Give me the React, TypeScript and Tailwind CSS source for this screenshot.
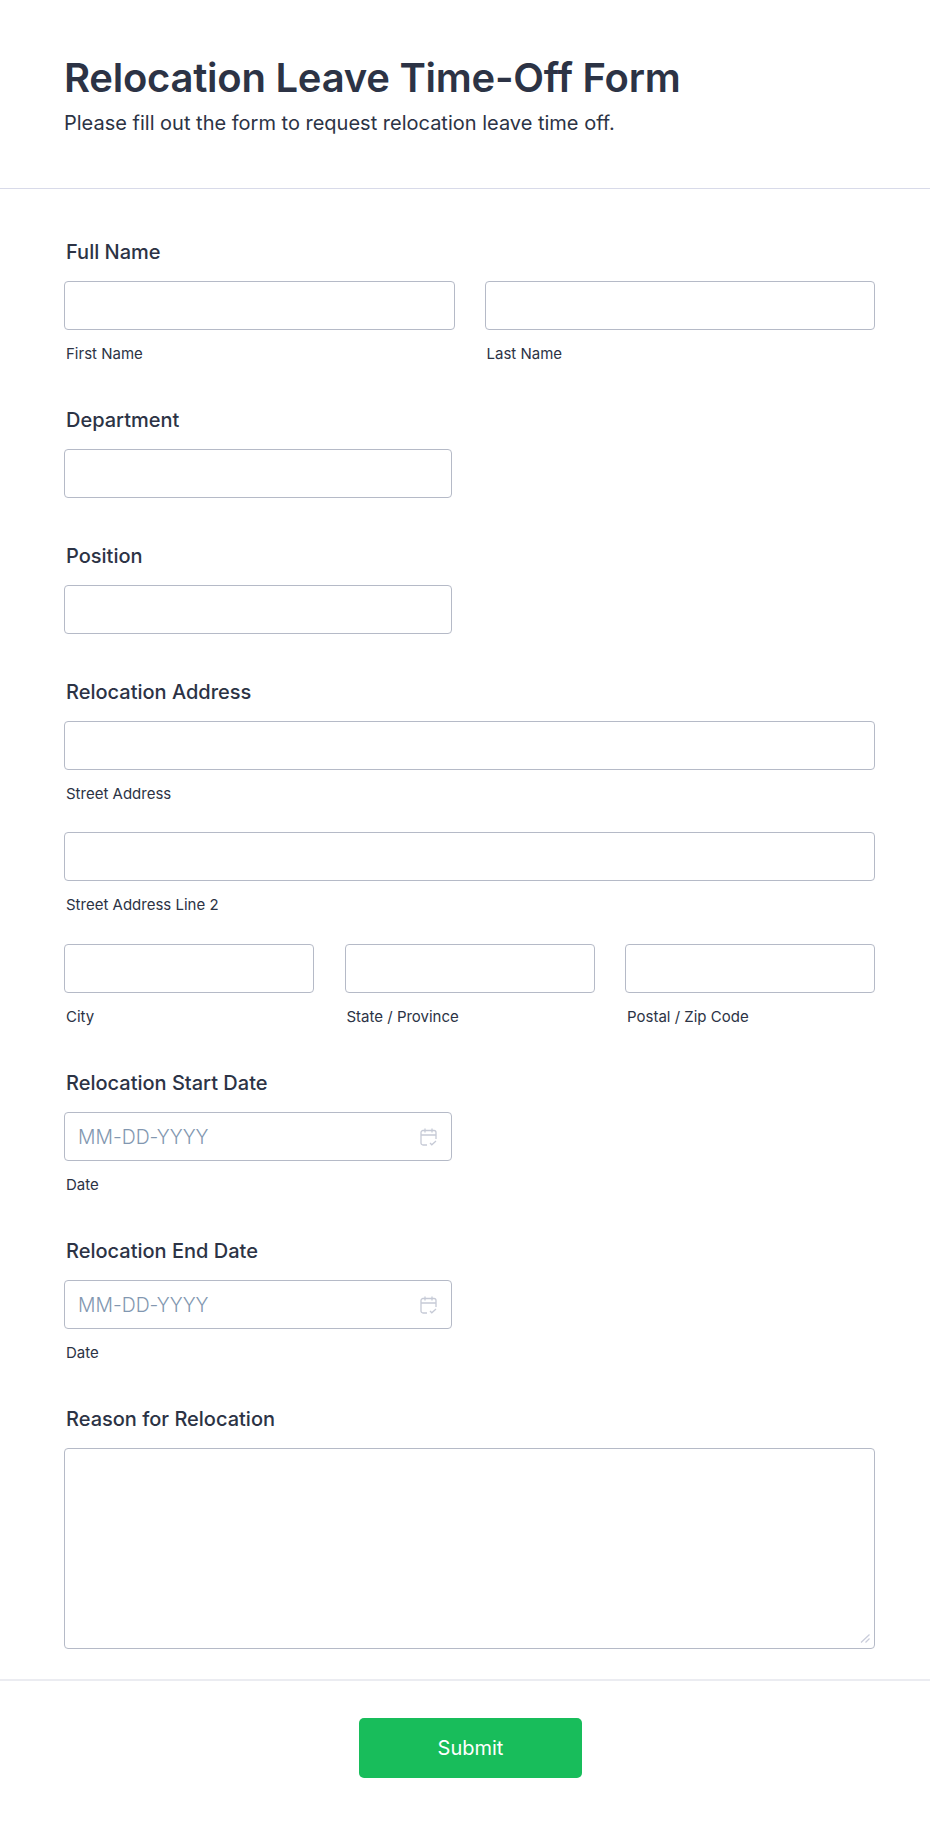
const TEXT_INPUT =
  'block h-[49px] w-full rounded-[4px] border border-[#b5bac7] bg-white px-[13px] text-[19.4px] font-light text-[#2c3345] outline-none placeholder:text-[#8297b0]';

function FieldLabel({ children }: { children: string }) {
  return <label className="mb-[15px] block pl-0.5 text-xl leading-7 font-medium text-[#2c3345]">{children}</label>;
}

function SubLabel({ children }: { children: string }) {
  return <div className="mt-3.5 h-5 pl-0.5 text-[15px] leading-5 text-[#2c3345]">{children}</div>;
}

function CalendarIcon() {
  return (
    <svg
      viewBox="0 0 17 18"
      fill="none"
      stroke="#c6cad6"
      strokeWidth="1.3"
      className="pointer-events-none absolute top-1/2 right-[15px] h-[18px] w-[17px] -translate-y-1/2"
    >
      <path d="M7 17H3a2 2 0 0 1-2-2V4.500a2 2 0 0 1 2-2h11a2 2 0 0 1 2 2V11" />
      <path d="M1 7h15M5 .5v4M12 .5v4" />
      <path d="M10 15l1.800 1.800L16 13" />
    </svg>
  );
}

function DateField({ label }: { label: string }) {
  return (
    <div className="pb-[42px]">
      <FieldLabel>{label}</FieldLabel>
      <div className="relative w-[388px]">
        <input className={TEXT_INPUT} placeholder="MM-DD-YYYY" />
        <CalendarIcon />
      </div>
      <SubLabel>Date</SubLabel>
    </div>
  );
}

export default function App() {
  return (
    <div className="min-h-[1827px] bg-white font-['Inter',sans-serif] text-[#2c3345] [font-variant-ligatures:none]">
      <header className="h-[189px] border-b border-[#d8dae9] px-16 pt-[52px]">
        <h1 className="text-[40px] leading-[52px] font-semibold tracking-[-0.25px]">Relocation Leave Time-Off Form</h1>
        <p className="mt-[5px] text-xl leading-7">Please fill out the form to request relocation leave time off.</p>
      </header>

      <form className="pt-[49px] pr-[55px] pl-16">
        <div className="pb-[42px]">
          <FieldLabel>Full Name</FieldLabel>
          <div className="grid grid-cols-2 gap-[30px]">
            <div>
              <input className={TEXT_INPUT} />
              <SubLabel>First Name</SubLabel>
            </div>
            <div>
              <input className={TEXT_INPUT} />
              <SubLabel>Last Name</SubLabel>
            </div>
          </div>
        </div>

        <div className="pb-11">
          <FieldLabel>Department</FieldLabel>
          <input className={`${TEXT_INPUT} !w-[388px]`} />
        </div>

        <div className="pb-11">
          <FieldLabel>Position</FieldLabel>
          <input className={`${TEXT_INPUT} !w-[388px]`} />
        </div>

        <div className="pb-[42px]">
          <FieldLabel>Relocation Address</FieldLabel>
          <input className={TEXT_INPUT} />
          <SubLabel>Street Address</SubLabel>
          <input className={`${TEXT_INPUT} mt-7`} />
          <SubLabel>Street Address Line 2</SubLabel>
          <div className="mt-[29px] grid grid-cols-3 gap-[30.5px]">
            <div>
              <input className={TEXT_INPUT} />
              <SubLabel>City</SubLabel>
            </div>
            <div>
              <input className={TEXT_INPUT} />
              <SubLabel>State / Province</SubLabel>
            </div>
            <div>
              <input className={TEXT_INPUT} />
              <SubLabel>Postal / Zip Code</SubLabel>
            </div>
          </div>
        </div>

        <DateField label="Relocation Start Date" />
        <DateField label="Relocation End Date" />

        <div className="pb-[30px]">
          <FieldLabel>Reason for Relocation</FieldLabel>
          <div className="relative">
            <textarea className="block h-[201px] w-full resize-none rounded-[4px] border border-[#b5bac7] bg-white px-3 py-2 text-lg outline-none" />
            <svg viewBox="0 0 10 9" fill="none" stroke="#c9ccda" strokeWidth="1.2" className="absolute right-[5px] bottom-[6px] h-[9px] w-[10px]">
              <path d="M1 8.500L9.500 0.500M5.500 8.500L9.500 4.500" />
            </svg>
          </div>
        </div>
      </form>

      <footer className="flex justify-center border-t-2 border-[#ebecf1] pt-[37px]">
        <button type="button" className="ml-[11px] h-[60px] w-[223px] rounded-[5px] bg-[#18bd5b] text-xl font-normal text-white">
          Submit
        </button>
      </footer>
    </div>
  );
}
